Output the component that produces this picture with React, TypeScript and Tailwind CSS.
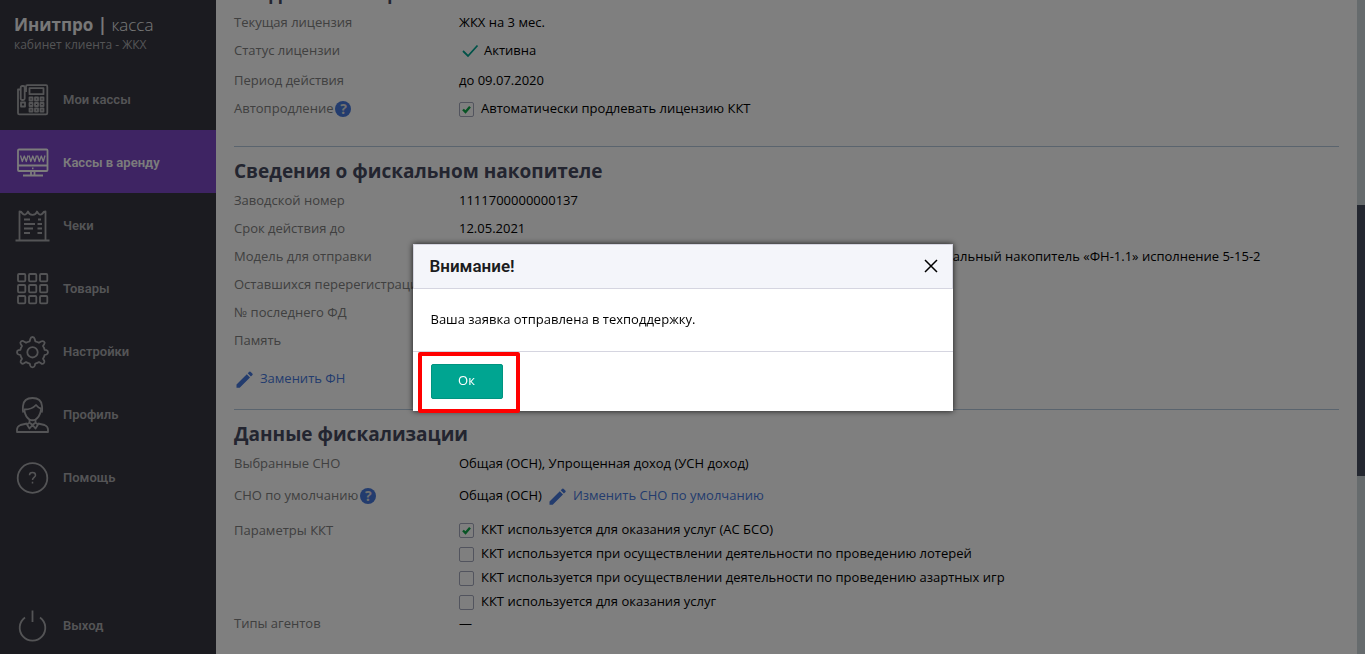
import type { ReactNode } from "react";

const navItems = [
  { label: "Мои кассы", icon: <PhoneIcon />, active: false },
  { label: "Кассы в аренду", icon: <MonitorIcon />, active: true },
  { label: "Чеки", icon: <ReceiptIcon />, active: false },
  { label: "Товары", icon: <GridIcon />, active: false },
  { label: "Настройки", icon: <GearIcon />, active: false },
  { label: "Профиль", icon: <UserIcon />, active: false },
  { label: "Помощь", icon: <HelpIcon />, active: false },
];

const kktParams = [
  { label: "ККТ используется для оказания услуг (АС БСО)", checked: true },
  { label: "ККТ используется при осуществлении деятельности по проведению лотерей", checked: false },
  { label: "ККТ используется при осуществлении деятельности по проведению азартных игр", checked: false },
  { label: "ККТ используется для оказания услуг", checked: false },
];

function NavSvg({ children }: { children: ReactNode }) {
  return (
    <svg className="h-9 w-9 shrink-0" viewBox="0 0 36 36" fill="none" stroke="currentColor" strokeWidth={1.8} strokeLinejoin="round" aria-hidden="true">
      {children}
    </svg>
  );
}

function PhoneIcon() {
  return (
    <NavSvg>
      <path d="M11 7V4.500Q11 3.200 12.300 3.200H31Q32.300 3.200 32.300 4.700V31Q32.300 32.300 31 32.300H4.300Q3 32.300 3 31V7.500H5.500" />
      <rect x="5.700" y="4" width="4" height="14" rx="1.500" />
      <path d="M9.700 7H11V10" />
      <rect x="14.500" y="6.200" width="14" height="6" />
      <rect x="6" y="20.500" width="4" height="4" />
      {[15.5, 21, 26.5].map((x) =>
        [16.5, 22, 27.5].map((y) => <rect key={`${x}-${y}`} x={x - 1} y={y - 1} width="3" height="3" />)
      )}
    </NavSvg>
  );
}

function MonitorIcon() {
  return (
    <NavSvg>
      <rect x="3" y="4.500" width="29.500" height="21.500" rx="1" />
      <path d="M3 20.500H32.500M16 26V30M19.500 26V30M8 30.500H28" />
      <path d="M17 23.300H18.500" />
      <path
        d="M5.500 10.500L7.300 16.500L9.300 11L11.300 16.500L13 10.500M14 10.500L15.800 16.500L17.800 11L19.800 16.500L21.500 10.500M22.500 10.500L24.300 16.500L26.300 11L28.300 16.500L30 10.500"
        strokeWidth={1.3}
      />
    </NavSvg>
  );
}

function ReceiptIcon() {
  return (
    <NavSvg>
      <path d="M4.500 32.500V3.500Q6.500 3.500 7.500 5.500Q10.500 8.500 13 3.500Q14 6.800 17.500 6.800Q21 6.800 22 3.500Q24.500 8.500 27.500 5.500Q28.500 3.500 30.500 3.500V32.500" />
      <path d="M0.500 32.500H34.500" />
      <path d="M9 11.500H15M9 16H20M9 20.500H18M9 25H15M23 11.500H26M22.500 16H27M22.500 20.500H27M22.500 25H27" />
    </NavSvg>
  );
}

function GridIcon() {
  return (
    <NavSvg>
      {[3, 14, 25].map((x) => [3, 14, 25].map((y) => <rect key={`${x}-${y}`} x={x} y={y} width="7.300" height="7.300" rx="1" />))}
    </NavSvg>
  );
}

function GearIcon() {
  return (
    <NavSvg>
      <path d="M15.300 5Q15.800 3 17.500 3T19.700 5L20.300 7.300Q22.500 7.800 24 8.800L26 7.500Q27.700 6.500 29 7.700T29.300 10L28 12Q29.300 14 29.600 15.800L31.500 16.200Q33 16.800 33 18.300T31.500 20.500L29.600 21Q29.300 22.800 28 24.800L29.200 26.700Q30 28.300 28.700 29.400T26 29.300L24 28.100Q22.500 29.100 20.300 29.600L19.700 31.800Q19.200 33.300 17.500 33.300T15.300 31.800L14.700 29.600Q12.500 29.100 11 28.100L9 29.300Q7.500 30.300 6.300 29.200T5.800 26.700L7 24.800Q5.700 22.800 5.400 21L3.500 20.500Q2 20 2 18.300T3.500 16.200L5.400 15.800Q5.700 14 7 12L5.700 10Q4.800 8.500 6.100 7.400T9 7.500L11 8.800Q12.500 7.800 14.700 7.300Z" />
      <circle cx="17.500" cy="18.300" r="5.200" />
    </NavSvg>
  );
}

function UserIcon() {
  return (
    <NavSvg>
      <path d="M8.500 15.500C7.500 14 7.700 12 8 9C8.500 3 12 1 17.500 1S26.500 3 27 9C27.300 12 27.500 14 26.500 15.500" />
      <path d="M9.500 12.500Q17 12.500 21 8Q23.500 11 25.800 11.500V14Q24.500 20 20.500 22.500Q17.500 24 14.500 22.500Q10.500 20 9.500 14Z" />
      <path d="M14.500 22.500V25.500L17.500 28L20.500 25.500V22.500M14.500 25.500L12 27.500L14.500 31.500L17.500 28L20.500 31.500L23 27.500L20.500 25.500" />
      <path d="M12 26.500L5.500 28Q2 29.500 2 32.500V35H33V32.500Q33 29.500 29.500 28L23 26.500" />
    </NavSvg>
  );
}

function HelpIcon() {
  return (
    <NavSvg>
      <circle cx="17.500" cy="18" r="14.800" />
      <path d="M14.500 15.200Q14.500 12.500 17.500 12.500T20.500 15.200C20.500 17.300 17.500 17.500 17.500 20M17.500 21.800V23.500" strokeWidth={1.5} />
    </NavSvg>
  );
}

function PowerIcon() {
  return (
    <NavSvg>
      <path d="M17.500 2.500V14M10 9.500A12.800 12.800 0 1 0 25 9.500" />
    </NavSvg>
  );
}

function PencilIcon() {
  return (
    <svg className="h-5 w-5 shrink-0" viewBox="0 0 20 20" fill="currentColor" aria-hidden="true">
      <path d="M2.500 15.500L12.800 5.200L16 8.400L5.700 18.700H2.500ZM13.700 4.300L15.300 2.700Q15.900 2.200 16.500 2.700L18.500 4.700Q19 5.300 18.500 5.900L16.900 7.500Z" />
    </svg>
  );
}

function HelpBadge() {
  return (
    <button type="button" aria-label="Подсказка" className="h-4 w-4 rounded-full bg-[#4678dc] text-center text-sm leading-4 font-bold text-[#e0e0e0]">
      ?
    </button>
  );
}

function Row({ label, children, help = false, className = "h-7" }: { label: string; children?: ReactNode; help?: boolean; className?: string }) {
  return (
    <div className={`flex items-center ${className}`}>
      <dt className="flex w-[225px] shrink-0 items-center gap-0.5 whitespace-nowrap text-[#808080]">
        {label}
        {help && <HelpBadge />}
      </dt>
      <dd className="flex items-center whitespace-nowrap">{children}</dd>
    </div>
  );
}

function Checkbox({ label, checked }: { label: string; checked: boolean }) {
  return (
    <label className="flex h-6 items-center gap-[7px]">
      <span className="grid h-[15px] w-[15px] place-items-center">
        <input
          type="checkbox"
          defaultChecked={checked}
          className="peer col-start-1 row-start-1 h-[15px] w-[15px] appearance-none rounded-xs border border-[#a4a8bc]"
        />
        <svg className="pointer-events-none col-start-1 row-start-1 hidden h-[9px] w-[9px] text-[#10a848] peer-checked:block" viewBox="0 0 9 9" fill="none" stroke="currentColor" strokeWidth={2.4}>
          <path d="M1 4.500L3.500 7L8 1.800" />
        </svg>
      </span>
      {label}
    </label>
  );
}

function Sidebar() {
  return (
    <aside className="flex w-[216px] shrink-0 flex-col bg-[#363640] text-[#a8a9ac]">
      <div className="h-[67px] px-[14px] pt-[13px]">
        <div className="text-[17px] leading-6 font-bold text-[#f0f0f0]">
          Инитпро | <span className="font-light">касса</span>
        </div>
        <div className="text-xs leading-4">кабинет клиента - ЖКХ</div>
      </div>
      <nav className="font-['Roboto',sans-serif] font-semibold">
        {navItems.map((item) => (
          <a key={item.label} href="#" className={`flex h-[63px] items-center gap-3 pt-0.5 pl-[15px] ${item.active ? "bg-[#7c48c6] text-[#f8f8f8]" : ""}`}>
            {item.icon}
            {item.label}
          </a>
        ))}
      </nav>
      <a href="#" className="mt-auto flex h-14 items-center gap-3 pl-[15px] font-['Roboto',sans-serif] font-semibold">
        <PowerIcon />
        Выход
      </a>
    </aside>
  );
}

function Dialog() {
  return (
    <div className="fixed inset-0 flex items-center justify-center bg-black/50">
      <div role="dialog" aria-modal="true" aria-labelledby="dialog-title" className="relative w-[540px] bg-white shadow-[0_0_6px_rgba(0,0,0,0.8)]">
        <header className="flex h-[45px] items-center justify-between border border-[#d5d5e0] bg-[#f4f5fa] pr-[14px] pl-4">
          <h2 id="dialog-title" className="pt-0.5 font-['Roboto',sans-serif] text-[17px] font-semibold text-[#1b1b20]">
            Внимание!
          </h2>
          <button type="button" aria-label="Закрыть">
            <svg className="h-[14px] w-[14px]" viewBox="0 0 14 14" fill="none" stroke="currentColor" strokeWidth={1.5} aria-hidden="true">
              <path d="M1 1L13 13M13 1L1 13" />
            </svg>
          </button>
        </header>
        <p className="px-[18px] pt-[19px] pb-[21px] leading-[22px]">Ваша заявка отправлена в техподдержку.</p>
        <footer className="border-t border-[#d5d5e0] px-[18px] py-3">
          <button type="button" className="block h-[35px] w-[72px] rounded-xs border border-[#009480] bg-[#00a591] text-white">
            Ок
          </button>
        </footer>
        <div className="pointer-events-none absolute -bottom-0.5 left-[5px] h-[61px] w-[102px] rounded-xs border-4 border-[#ff0000]" />
      </div>
    </div>
  );
}

export default function App() {
  return (
    <div className="flex h-screen overflow-hidden bg-white font-['Open_Sans',sans-serif] text-[13px] text-black">
      <Sidebar />

      <main className="min-w-0 flex-1 overflow-hidden px-[18px]">
        <section className="-mt-[23px] border-b border-[#b4c8dc] pb-[25px]">
          <h2 className="h-8 text-[19px] leading-8 font-bold text-[#464a60]">Сведения о лицензии</h2>
          <dl>
            <Row label="Текущая лицензия">ЖКХ на 3 мес.</Row>
            <Row label="Статус лицензии">
              <svg className="mr-1 ml-[3px] h-[18px] w-[18px] text-[#00a591]" viewBox="0 0 18 18" fill="none" stroke="currentColor" strokeWidth={1.8} aria-hidden="true">
                <path d="M1 9L6 14L15.500 3.500" />
              </svg>
              Активна
            </Row>
            <Row label="Период действия" className="h-8">до 09.07.2020</Row>
            <Row label="Автопродление" help className="h-6">
              <Checkbox label="Автоматически продлевать лицензию ККТ" checked />
            </Row>
          </dl>
        </section>

        <section className="border-b border-[#b4c8dc] pt-2 pb-[14px]">
          <h2 className="h-8 text-[19px] leading-8 font-bold text-[#464a60]">Сведения о фискальном накопителе</h2>
          <dl>
            <Row label="Заводской номер">1111700000000137</Row>
            <Row label="Срок действия до">12.05.2021</Row>
            <Row label="Модель для отправки">
              Шифровальное (криптографическое) ср-во защиты фискальных данных фискальный накопитель «ФН-1.1» исполнение 5-15-2
            </Row>
            <Row label="Оставшихся перерегистраций" />
            <Row label="№ последнего ФД" />
            <Row label="Память" />
          </dl>
          <a href="#" className="mt-2 flex h-8 items-center gap-[6px] text-[#4678dc]">
            <PencilIcon />
            Заменить ФН
          </a>
        </section>

        <section className="pt-2">
          <h2 className="h-8 text-[19px] leading-8 font-bold text-[#464a60]">Данные фискализации</h2>
          <dl>
            <Row label="Выбранные СНО">Общая (ОСН), Упрощенная доход (УСН доход)</Row>
            <Row label="СНО по умолчанию" help className="h-9">
              Общая (ОСН)
              <a href="#" className="ml-[5px] flex items-center gap-[6px] text-[#4678dc]">
                <PencilIcon />
                Изменить СНО по умолчанию
              </a>
            </Row>
            <div className="flex pt-1">
              <dt className="w-[225px] shrink-0 leading-6 text-[#808080]">Параметры ККТ</dt>
              <dd className="whitespace-nowrap">
                {kktParams.map((param) => (
                  <Checkbox key={param.label} {...param} />
                ))}
              </dd>
            </div>
            <Row label="Типы агентов" className="h-5">—</Row>
          </dl>
        </section>
      </main>

      <div className="flex w-2 shrink-0 flex-col bg-[#ccd6da]">
        <div className="grow-[205]" />
        <div className="grow-[271] bg-[#464e60]" />
        <div className="grow-[178]" />
      </div>

      <Dialog />
    </div>
  );
}
